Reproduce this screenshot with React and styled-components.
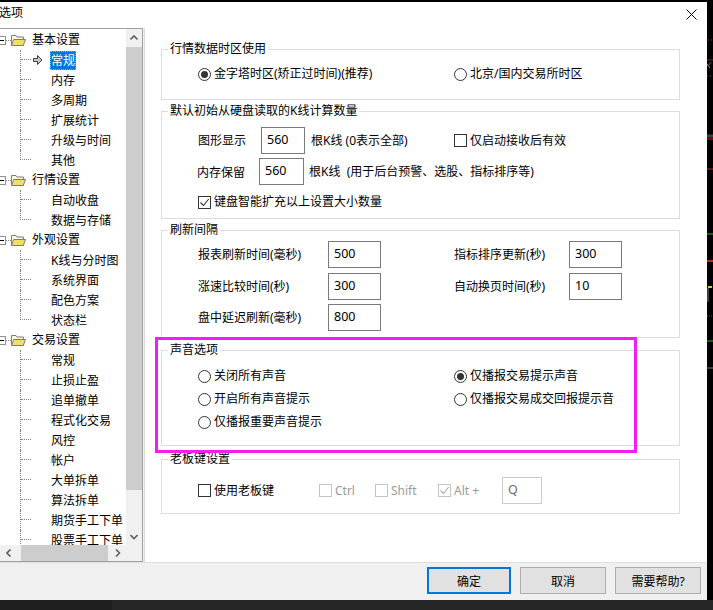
import styled, { createGlobalStyle } from "styled-components";

const GlobalStyle = createGlobalStyle`
  html, body { margin: 0; padding: 0; background: #000; }
  body {
    font-family: "Noto Sans", "Noto Sans CJK SC", sans-serif;
    font-size: 12px;
    color: #000;
  }
  * { box-sizing: border-box; }
`;

const TREE = [
  { name: "基本设置", children: ["常规", "内存", "多周期", "扩展统计", "升级与时间", "其他"] },
  { name: "行情设置", children: ["自动收盘", "数据与存储"] },
  { name: "外观设置", children: ["K线与分时图", "系统界面", "配色方案", "状态栏"] },
  {
    name: "交易设置",
    open: true,
    children: ["常规", "止损止盈", "追单撤单", "程式化交易", "风控", "帐户", "大单拆单", "算法拆单", "期货手工下单", "股票手工下单"],
  },
];

const Screen = styled.div`
  width: 713px;
  height: 610px;
  overflow: hidden;
  background: #000;
  display: flex;
  flex-direction: column;
`;

const TopStrip = styled.div`
  flex: none;
  height: 2px;
  background: #000;
`;

const Middle = styled.div`
  flex: none;
  height: 598px;
  display: flex;
`;

const BottomStrip = styled.div`
  flex: 1;
  background: linear-gradient(90deg, #1e1e1e 0 112px, #262626 112px);
`;

const ChartStrip = styled.div`
  flex: 1;
  background: #000;
`;

const Dialog = styled.div`
  width: 707px;
  flex: none;
  display: flex;
  flex-direction: column;
  background: #f0f0f0;
`;

const TitleBar = styled.div`
  height: 26px;
  flex: none;
  background: #fff;
  display: flex;
  justify-content: space-between;
  align-items: flex-start;
  padding: 3px 10px 0 0;
`;

const TitleText = styled.span`
  margin-left: -1px;
  line-height: 16px;
`;

const CloseBtn = styled.span`
  display: flex;
  margin-top: 4px;
`;

const Body = styled.div`
  height: 534px;
  flex: none;
  display: flex;
  gap: 1px;
`;

const TreeBox = styled.div`
  width: 143px;
  flex: none;
  background: #fff;
  border-top: 1px solid #a0a0a0;
  border-right: 1px solid #a0a0a0;
  border-bottom: 1px solid #a0a0a0;
  display: grid;
  grid-template-columns: 126px 16px;
  grid-template-rows: 516px 16px;
`;

const TreeContent = styled.div`
  overflow: hidden;
  padding-top: 1px;
`;

const RootRow = styled.div`
  height: 20px;
  display: flex;
  align-items: center;
  white-space: nowrap;
  line-height: 20px;
`;

const Expander = styled.span`
  flex: none;
  width: 9px;
  height: 9px;
  margin-left: -3px;
  border: 1px solid #919191;
  background: #fff;
  display: flex;
  align-items: center;
  justify-content: center;
  &::after {
    content: "";
    width: 5px;
    height: 1px;
    background: #000;
  }
`;

const Connector = styled.span`
  flex: none;
  width: ${(p) => p.$w}px;
  border-top: 1px dotted #808080;
`;

const FolderSlot = styled.span`
  flex: none;
  display: flex;
  margin-right: 6px;
`;

const ChildRow = styled.div`
  height: 20px;
  display: flex;
  align-items: center;
  white-space: nowrap;
  line-height: 20px;
`;

const Stem = styled.span`
  flex: none;
  position: relative;
  width: 11px;
  height: ${(p) => (p.$last ? "10px" : "20px")};
  align-self: flex-start;
  margin-left: 20px;
  border-left: 1px dotted #808080;
  border-bottom: ${(p) => (p.$last ? "1px dotted #808080" : "none")};
  &::after {
    content: "";
    display: ${(p) => (p.$last ? "none" : "block")};
    position: absolute;
    left: 0;
    top: 9px;
    width: 10px;
    border-top: 1px dotted #808080;
  }
`;

const IconSlot = styled.span`
  flex: none;
  width: 20px;
  display: flex;
  padding-left: 2px;
`;

const NodeLabel = styled.span`
  line-height: 19px;
  padding: 0 1px;
  margin-left: -1px;
  color: ${(p) => (p.$selected ? "#fff" : "#000")};
  background: ${(p) => (p.$selected ? "#0078d7" : "transparent")};
  outline: ${(p) => (p.$selected ? "1px dotted #f0a030" : "none")};
  outline-offset: -1px;
`;

const VScroll = styled.div`
  background: #f0f0f0;
  display: flex;
  flex-direction: column;
`;

const HScroll = styled.div`
  background: #f0f0f0;
  display: flex;
`;

const Corner = styled.div`
  background: #f0f0f0;
`;

const ScrollBtn = styled.div`
  flex: none;
  width: ${(p) => (p.$h ? "17px" : "auto")};
  height: ${(p) => (p.$h ? "auto" : "17px")};
  display: flex;
  align-items: center;
  justify-content: center;
`;

const VThumb = styled.div`
  flex: none;
  margin-top: 1px;
  height: 443px;
  background: #cdcdcd;
`;

const HThumb = styled.div`
  flex: none;
  margin-left: 4px;
  width: 87px;
  background: #cdcdcd;
`;

const Track = styled.div`
  flex: 1;
`;

const Panel = styled.div`
  flex: 1;
  position: relative;
  background: #fff;
  border-left: 1px solid #dadada;
  padding: 0 27px 0 16px;
`;

const Group = styled.div`
  border: 1px solid #dcdcdc;
  margin-top: ${(p) => p.$mt}px;
  padding: 0 0 ${(p) => p.$pb}px 36px;
`;

const Caption = styled.div`
  width: fit-content;
  height: 16px;
  margin: -9px 0 0 -30px;
  padding: 0 2px;
  background: #fff;
  line-height: 16px;
`;

const FormRow = styled.div`
  display: grid;
  grid-template-columns: 256px auto;
  align-items: center;
  height: ${(p) => p.$h}px;
  margin-top: ${(p) => p.$mt}px;
`;

const Cell = styled.div`
  display: flex;
  align-items: center;
  grid-column: ${(p) => (p.$span ? "1 / 3" : "auto")};
  margin-left: ${(p) => p.$ml || 0}px;
`;

const FieldLabel = styled.span`
  flex: none;
  width: ${(p) => p.$w}px;
  line-height: 16px;
  margin-top: ${(p) => p.$mt || 0}px;
  white-space: nowrap;
`;

const Note = styled.span`
  margin-left: ${(p) => p.$ml}px;
  line-height: 16px;
  white-space: nowrap;
`;

const TextBox = styled.div`
  flex: none;
  width: ${(p) => p.$w}px;
  height: 27px;
  border: 1px solid ${(p) => (p.$disabled ? "#cccccc" : "#7a7a7a")};
  color: ${(p) => (p.$disabled ? "#6d6d6d" : "#000")};
  background: #fff;
  padding: 3px 0 0 5px;
  line-height: 18px;
  font-size: 12.5px;
`;

const Option = styled.span`
  display: inline-flex;
  align-items: center;
  gap: 3px;
  flex: none;
  width: ${(p) => (p.$w ? `${p.$w}px` : "auto")};
  color: ${(p) => (p.$disabled ? "#9a9a9a" : "#000")};
  line-height: 16px;
  white-space: nowrap;
`;

const RadioDot = styled.span`
  flex: none;
  width: 13px;
  height: 13px;
  border: 1px solid #333;
  border-radius: 50%;
  background: #fff;
  display: flex;
  align-items: center;
  justify-content: center;
  &::after {
    content: "";
    display: ${(p) => (p.$on ? "block" : "none")};
    width: 7px;
    height: 7px;
    border-radius: 50%;
    background: #333;
  }
`;

const CheckBox = styled.span`
  flex: none;
  width: 13px;
  height: 13px;
  border: 1px solid ${(p) => (p.$disabled ? "#c4c4c4" : "#333")};
  background: #fff;
  display: flex;
  align-items: center;
  justify-content: center;
`;

const RadioList = styled.div`
  display: grid;
  grid-template-columns: 256px auto;
  grid-auto-rows: 20px;
  row-gap: 3px;
  align-items: center;
  padding-top: 8px;
`;

const BossRow = styled.div`
  display: flex;
  align-items: center;
  height: 27px;
  margin-top: 10px;
`;

const Highlight = styled.div`
  position: absolute;
  left: 10px;
  top: 309px;
  width: 482px;
  height: 116px;
  border: 3px solid #f01ef0;
  pointer-events: none;
`;

const Footer = styled.div`
  flex: 1;
  border-top: 1px solid #dfdfdf;
  display: flex;
  justify-content: flex-end;
  align-items: flex-start;
  gap: 9px;
  padding: 4px 6px 0 0;
`;

const Button = styled.button`
  width: ${(p) => p.$w}px;
  height: 27px;
  padding: 0;
  font: inherit;
  font-size: 12px;
  color: #000;
  background: #e1e1e1;
  border: ${(p) => (p.$primary ? "2px solid #0078d7" : "1px solid #adadad")};
`;

const Chevron = ({ dir }) => {
  const pts = {
    up: "0.5,4.5 4,1 7.5,4.5",
    down: "0.5,1 4,4.5 7.5,1",
    left: "4.5,0.5 1,4 4.5,7.5",
    right: "1,0.5 4.5,4 1,7.5",
  }[dir];
  const vertical = dir === "up" || dir === "down";
  return (
    <svg width={vertical ? 8 : 6} height={vertical ? 6 : 8} viewBox={vertical ? "0 0 8 6" : "0 0 6 8"}>
      <polyline points={pts} fill="none" stroke="#606060" strokeWidth="1.6" />
    </svg>
  );
};

const Folder = () => (
  <svg width="15" height="12" viewBox="0 0 15 12">
    <path d="M0.5 1.5h4.5l1 1.5h6.5v8.5h-12z" fill="#fdf6d8" stroke="#7d7d7d" />
    <path d="M0.5 11.5l2.2-6h11.8l-2.2 6z" fill="#f2dc6a" stroke="#7d7d7d" />
  </svg>
);

const PointArrow = () => (
  <svg width="10" height="10" viewBox="0 0 10 10">
    <path d="M0.5 3.5h4v-3l4.5 4.5-4.5 4.5v-3h-4z" fill="#c9c9c9" stroke="#3c3c3c" />
  </svg>
);

const Tick = ({ color }) => (
  <svg width="11" height="11" viewBox="0 0 11 11">
    <path d="M1.5 5.5l3 3 5.2-6.5" fill="none" stroke={color} strokeWidth="1.1" />
  </svg>
);

const Radio = ({ on, children, w }) => (
  <Option $w={w}>
    <RadioDot $on={on} />
    {children}
  </Option>
);

const Check = ({ on, disabled, children, w }) => (
  <Option $w={w} $disabled={disabled}>
    <CheckBox $disabled={disabled}>{on && <Tick color={disabled ? "#a8a8a8" : "#333"} />}</CheckBox>
    {children}
  </Option>
);

const Tree = () => (
  <TreeContent>
    {TREE.map((group, gi) => (
      <div key={group.name}>
        <RootRow>
          <Expander />
          <Connector $w={5} />
          <FolderSlot>
            <Folder />
          </FolderSlot>
          <span>{group.name}</span>
        </RootRow>
        {group.children.map((child, ci) => {
          const selected = gi === 0 && ci === 0;
          return (
            <ChildRow key={child + ci}>
              <Stem $last={!group.open && ci === group.children.length - 1} />
              <IconSlot>{selected && <PointArrow />}</IconSlot>
              <NodeLabel $selected={selected}>{child}</NodeLabel>
            </ChildRow>
          );
        })}
      </div>
    ))}
  </TreeContent>
);

const Chart = () => (
  <svg width="6" height="598" viewBox="0 0 6 598">
    <line x1="1" y1="38" x2="6" y2="38" stroke="#c02020" strokeDasharray="1 2" />
    <line x1="0" y1="58" x2="6" y2="58" stroke="#3a3a3a" />
    <line x1="0" y1="62" x2="3" y2="66" stroke="#30c0c0" />
    <line x1="1" y1="64" x2="4" y2="60" stroke="#d03030" />
    <line x1="0" y1="74" x2="6" y2="74" stroke="#c02020" strokeDasharray="1 2" />
    <line x1="0" y1="134" x2="6" y2="134" stroke="#404040" strokeWidth="3" />
    <line x1="0" y1="137" x2="6" y2="137" stroke="#c02020" />
    <line x1="0" y1="167" x2="6" y2="167" stroke="#c02020" />
    <line x1="0" y1="232" x2="6" y2="232" stroke="#20c020" />
    <line x1="0" y1="259" x2="6" y2="259" stroke="#d02020" strokeWidth="2" />
    <rect x="1" y="284" width="4" height="2" fill="#d0d020" />
    <line x1="1" y1="286" x2="1" y2="300" stroke="#808080" />
    <line x1="0" y1="314" x2="6" y2="314" stroke="#a02020" strokeDasharray="1 1" />
    <line x1="0" y1="339" x2="6" y2="339" stroke="#20c020" />
    <line x1="0" y1="366" x2="6" y2="366" stroke="#3a3a3a" strokeWidth="2" />
  </svg>
);

export default function App() {
  return (
    <>
      <GlobalStyle />
      <Screen>
        <TopStrip />
        <Middle>
          <Dialog>
            <TitleBar>
              <TitleText>选项</TitleText>
              <CloseBtn>
                <svg width="11" height="11" viewBox="0 0 11 11">
                  <path d="M0.5 0.5l10 10M10.5 0.5l-10 10" stroke="#000" strokeWidth="1" />
                </svg>
              </CloseBtn>
            </TitleBar>

            <Body>
              <TreeBox>
                <Tree />
                <VScroll>
                  <ScrollBtn>
                    <Chevron dir="up" />
                  </ScrollBtn>
                  <VThumb />
                  <Track />
                  <ScrollBtn>
                    <Chevron dir="down" />
                  </ScrollBtn>
                </VScroll>
                <HScroll>
                  <ScrollBtn $h>
                    <Chevron dir="left" />
                  </ScrollBtn>
                  <HThumb />
                  <Track />
                  <ScrollBtn $h>
                    <Chevron dir="right" />
                  </ScrollBtn>
                </HScroll>
                <Corner />
              </TreeBox>

              <Panel>
                <Group $mt={21} $pb={15}>
                  <Caption>行情数据时区使用</Caption>
                  <FormRow $h={20} $mt={7}>
                    <Cell>
                      <Radio on>金字塔时区(矫正过时间)(推荐)</Radio>
                    </Cell>
                    <Cell>
                      <Radio>北京/国内交易所时区</Radio>
                    </Cell>
                  </FormRow>
                </Group>

                <Group $mt={11} $pb={6}>
                  <Caption>默认初始从硬盘读取的K线计算数量</Caption>
                  <FormRow $h={27} $mt={8}>
                    <Cell>
                      <FieldLabel $w={63}>图形显示</FieldLabel>
                      <TextBox $w={44}>560</TextBox>
                      <Note $ml={6}>根K线 (0表示全部)</Note>
                    </Cell>
                    <Cell>
                      <Check>仅启动接收后有效</Check>
                    </Cell>
                  </FormRow>
                  <FormRow $h={27} $mt={4}>
                    <Cell $span $ml={-1}>
                      <FieldLabel $w={62} $mt={3}>
                        内存保留
                      </FieldLabel>
                      <TextBox $w={45}>560</TextBox>
                      <Note $ml={5}>根K线 &nbsp;(用于后台预警、选股、指标排序等)</Note>
                    </Cell>
                  </FormRow>
                  <FormRow $h={20} $mt={7}>
                    <Cell $span>
                      <Check on>键盘智能扩充以上设置大小数量</Check>
                    </Cell>
                  </FormRow>
                </Group>

                <Group $mt={11} $pb={6}>
                  <Caption>刷新间隔</Caption>
                  <FormRow $h={27} $mt={3}>
                    <Cell>
                      <FieldLabel $w={130}>报表刷新时间(毫秒)</FieldLabel>
                      <TextBox $w={53}>500</TextBox>
                    </Cell>
                    <Cell>
                      <FieldLabel $w={115}>指标排序更新(秒)</FieldLabel>
                      <TextBox $w={53}>300</TextBox>
                    </Cell>
                  </FormRow>
                  <FormRow $h={27} $mt={5}>
                    <Cell>
                      <FieldLabel $w={130}>涨速比较时间(秒)</FieldLabel>
                      <TextBox $w={53}>300</TextBox>
                    </Cell>
                    <Cell>
                      <FieldLabel $w={115}>自动换页时间(秒)</FieldLabel>
                      <TextBox $w={53}>10</TextBox>
                    </Cell>
                  </FormRow>
                  <FormRow $h={27} $mt={4}>
                    <Cell>
                      <FieldLabel $w={130}>盘中延迟刷新(毫秒)</FieldLabel>
                      <TextBox $w={53}>800</TextBox>
                    </Cell>
                  </FormRow>
                </Group>

                <Group $mt={12} $pb={13}>
                  <Caption>声音选项</Caption>
                  <RadioList>
                    <Radio>关闭所有声音</Radio>
                    <Radio on>仅播报交易提示声音</Radio>
                    <Radio>开启所有声音提示</Radio>
                    <Radio>仅播报交易成交回报提示音</Radio>
                    <Radio>仅播报重要声音提示</Radio>
                  </RadioList>
                </Group>

                <Group $mt={13} $pb={9}>
                  <Caption>老板键设置</Caption>
                  <BossRow>
                    <Check w={121}>使用老板键</Check>
                    <Check w={56} disabled>
                      Ctrl
                    </Check>
                    <Check w={63} disabled>
                      Shift
                    </Check>
                    <Check w={64} disabled on>
                      Alt +
                    </Check>
                    <TextBox $w={40} $disabled>
                      Q
                    </TextBox>
                  </BossRow>
                </Group>

                <Highlight />
              </Panel>
            </Body>

            <Footer>
              <Button $w={84} $primary>
                确定
              </Button>
              <Button $w={86}>取消</Button>
              <Button $w={86}>需要帮助?</Button>
            </Footer>
          </Dialog>
          <ChartStrip>
            <Chart />
          </ChartStrip>
        </Middle>
        <BottomStrip />
      </Screen>
    </>
  );
}
